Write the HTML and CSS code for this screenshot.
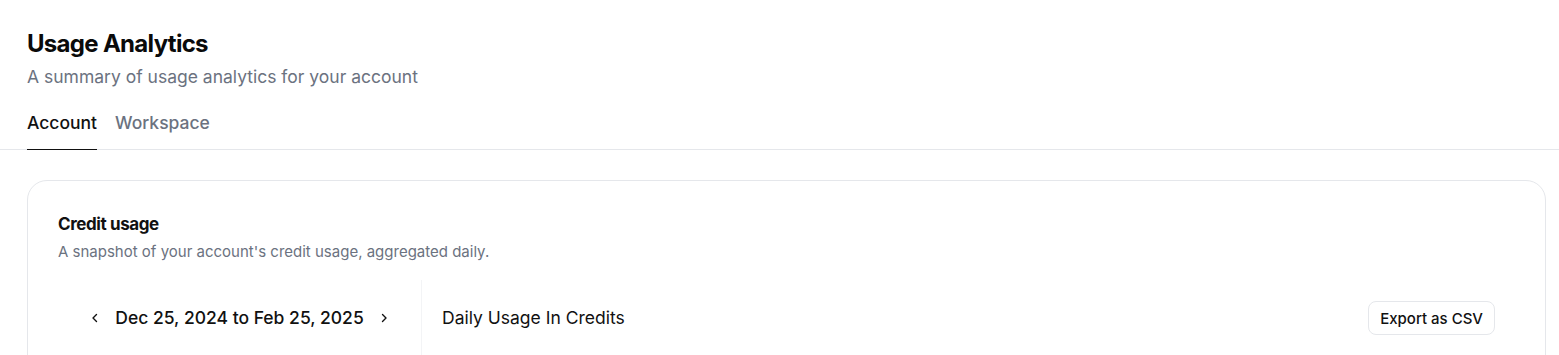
FILE: index.html
```html
<!DOCTYPE html>
<html lang="en">
<head>
<meta charset="utf-8">
<title>Usage Analytics</title>
<link rel="stylesheet" href="styles.css">
</head>
<body>
<header class="page-header">
  <h1 class="title">Usage Analytics</h1>
  <p class="subtitle">A summary of usage analytics for your account</p>
  <nav class="tabs">
    <a class="tab active">Account</a>
    <a class="tab">Workspace</a>
  </nav>
</header>
<main class="content">
  <section class="card">
    <h2 class="card-title">Credit usage</h2>
    <p class="card-sub">A snapshot of your account's credit usage, aggregated daily.</p>
    <div class="panel">
      <div class="range-col">
        <div class="range">
          <button class="chev" aria-label="Previous">
            <svg width="8" height="12" viewBox="0 0 8 12"><path d="M5.5 2.5 L2 6 L5.5 9.5" fill="none" stroke="#111" stroke-width="1.4" stroke-linecap="round" stroke-linejoin="round"/></svg>
          </button>
          <span class="range-text">Dec 25, 2024 to Feb 25, 2025</span>
          <button class="chev" aria-label="Next">
            <svg width="8" height="12" viewBox="0 0 8 12"><path d="M2.5 2.5 L6 6 L2.5 9.5" fill="none" stroke="#111" stroke-width="1.4" stroke-linecap="round" stroke-linejoin="round"/></svg>
          </button>
        </div>
      </div>
      <div class="chart-col">
        <div class="chart-head">
          <span class="chart-title">Daily Usage In Credits</span>
          <button class="export">Export as CSV</button>
        </div>
      </div>
    </div>
  </section>
</main>
</body>
</html>
```
FILE: styles.css
```css
* { box-sizing: border-box; }
html, body { margin: 0; padding: 0; background: #fff; }
body {
  font-family: Inter, "Noto Sans", sans-serif;
  color: #111;
  overflow: hidden;
}
.page-header {
  padding: 29px 27px 0 27px;
  border-bottom: 1px solid #e5e7eb;
}
.title {
  margin: 0;
  font-size: 24px;
  line-height: 30px;
  font-weight: 700;
  letter-spacing: -0.7px;
  color: #0a0a0a;
}
.subtitle {
  margin: 6px 0 0 0;
  font-size: 17.5px;
  line-height: 24px;
  color: #6b7280;
}
.tabs {
  display: flex;
  gap: 18px;
  margin-top: 22px;
}
.tab {
  font-size: 17.5px;
  line-height: 24px;
  padding-bottom: 14px;
  color: #6b7280;
  font-weight: 500;
  margin-bottom: -1px;
  border-bottom: 1px solid transparent;
}
.tab.active {
  color: #111;
  border-bottom-color: #111;
}
.content {
  padding: 30px 13px 0 27px;
}
.card {
  border: 1px solid #e5e7eb;
  border-radius: 20px;
  padding: 31px 30px 0 30px;
  height: 400px;
}
.card-title {
  margin: 0;
  font-size: 17px;
  line-height: 24px;
  font-weight: 700;
  letter-spacing: -0.4px;
}
.card-sub {
  margin: 5px 0 0 0;
  font-size: 15px;
  line-height: 22px;
  color: #6b7280;
}
.panel {
  display: flex;
  margin-top: 17px;
}
.range-col {
  width: 364px;
  border-right: 1px solid #f3f4f6;
  padding-top: 21px;
  display: flex;
  justify-content: center;
  height: 300px;
}
.range {
  display: flex;
  align-items: center;
  gap: 16px;
  height: 34px;
}
.chev {
  border: 0;
  background: none;
  padding: 0;
  width: 8px;
  height: 12px;
  display: flex;
}
.range-text {
  font-size: 17.5px;
  font-weight: 500;
  line-height: 24px;
}
.chart-col {
  flex: 1;
  padding: 21px 20px 0 20px;
}
.chart-head {
  display: flex;
  align-items: center;
  justify-content: space-between;
  height: 34px;
}
.chart-title {
  font-size: 17.5px;
  line-height: 24px;
}
.export {
  font-family: inherit;
  font-size: 15px;
  font-weight: 500;
  color: #111;
  background: #fff;
  border: 1px solid #e5e7eb;
  border-radius: 8px;
  height: 34px;
  padding: 0 11px;
}
```
